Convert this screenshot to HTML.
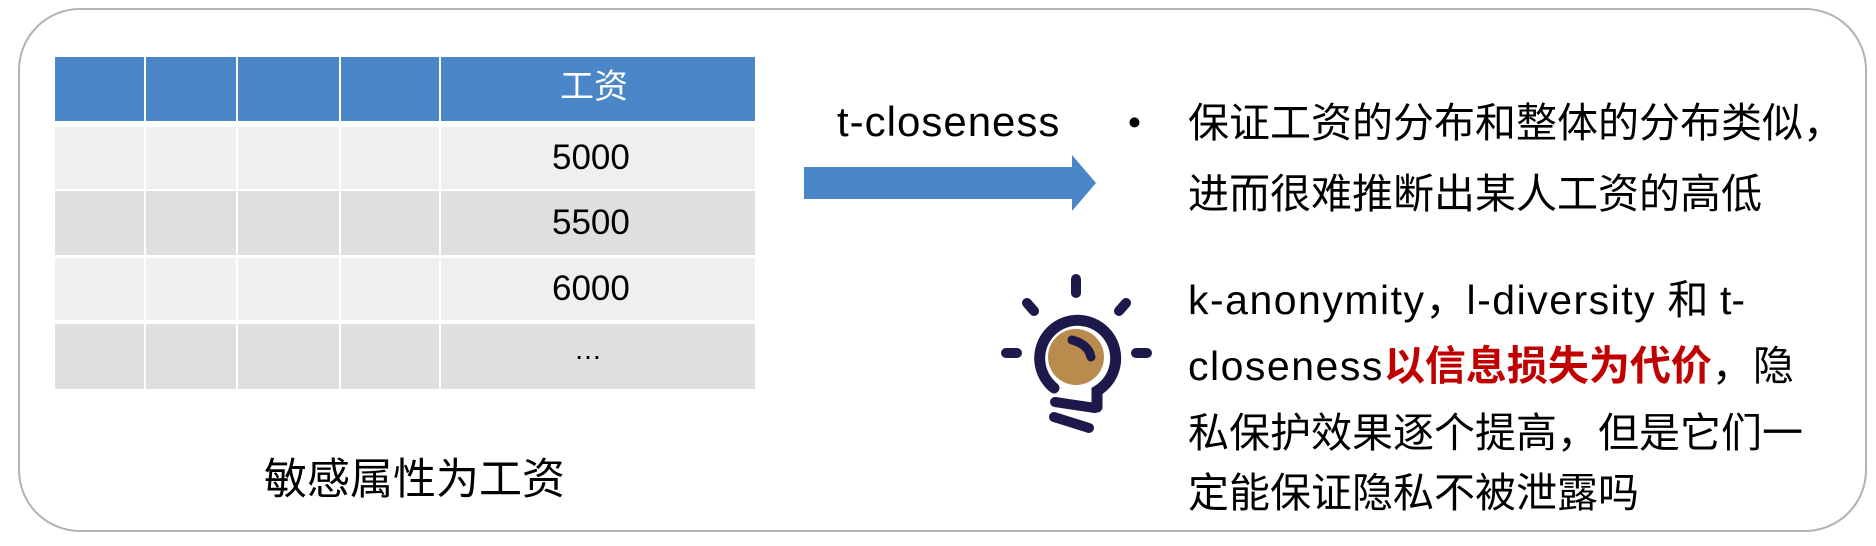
<!DOCTYPE html>
<html><head><meta charset="utf-8"><style>
html,body{margin:0;padding:0;background:#fff;}
body{width:1876px;height:546px;position:relative;overflow:hidden;font-family:"Liberation Sans","Noto Sans CJK SC",sans-serif;color:#000;}
.frame{position:absolute;left:18px;top:8px;width:1849px;height:524px;border:2px solid #b3b3b3;border-radius:62px;box-sizing:border-box;}
.c{position:absolute;box-sizing:border-box;}
.t{position:absolute;white-space:nowrap;}
.l{letter-spacing:1.5px;}
</style></head><body>
<div class="frame"></div>

<div class="c" style="left:55px;top:57px;width:700px;height:64px;background:#4a86c8;"></div>
<div class="c" style="left:55px;top:127px;width:700px;height:62px;background:#efefef;"></div>
<div class="c" style="left:55px;top:191px;width:700px;height:64px;background:#dfdfdf;"></div>
<div class="c" style="left:55px;top:258px;width:700px;height:62px;background:#efefef;"></div>
<div class="c" style="left:55px;top:324px;width:700px;height:65px;background:#dfdfdf;"></div>
<div class="c" style="left:144px;top:57px;width:2px;height:332px;background:#fff;"></div>
<div class="c" style="left:236px;top:57px;width:2px;height:332px;background:#fff;"></div>
<div class="c" style="left:339px;top:57px;width:2px;height:332px;background:#fff;"></div>
<div class="c" style="left:439px;top:57px;width:2px;height:332px;background:#fff;"></div>
<div class="t" style="left:560px;top:67px;font-size:34px;color:#fff;line-height:40px;">工资</div>
<div class="t" style="left:552px;top:138px;font-size:35px;line-height:40px;">5000</div>
<div class="t" style="left:552px;top:203px;font-size:35px;line-height:40px;">5500</div>
<div class="t" style="left:552px;top:269px;font-size:35px;line-height:40px;">6000</div>
<div class="t" style="left:574px;top:330px;font-size:28px;line-height:40px;">…</div>
<div class="t" style="left:264px;top:453px;font-size:43px;line-height:54px;">敏感属性为工资</div>

<div class="t" style="left:837px;top:97px;font-size:42px;line-height:50px;letter-spacing:1px;">t-closeness</div>
<svg class="c" style="left:0;top:0" width="1876" height="546">
<polygon points="804,167 1072,167 1072,155 1096,183 1072,211 1072,199 804,199" fill="#4a86c8"/>
<g stroke="#1b1a4b" stroke-linecap="round" fill="none" stroke-width="10">
<line x1="1076" y1="279" x2="1076" y2="293"/>
<line x1="1027" y1="303" x2="1034" y2="311"/>
<line x1="1126" y1="303" x2="1119" y2="311"/>
<line x1="1006" y1="353" x2="1017" y2="353"/>
<line x1="1136" y1="353" x2="1147" y2="353"/>
<path d="M1054,388 A38,38 0 1 1 1097,391 L1097,407" stroke-width="11"/>
<line x1="1055" y1="402" x2="1095" y2="408"/>
<line x1="1054" y1="417" x2="1089" y2="428"/>
</g>
<circle cx="1076" cy="357" r="28" fill="#b98c4e"/>
<path d="M1072,340 Q1088,344 1091,357" stroke="#1b1a4b" stroke-width="9" stroke-linecap="round" fill="none"/>
</svg>

<div class="t" style="left:1128px;top:99px;font-size:37px;line-height:48px;">•</div>
<div class="t" style="left:1188px;top:96px;font-size:41px;line-height:54px;">保证工资的分布和整体的分布类似，</div>
<div class="t" style="left:1188px;top:167px;font-size:41px;line-height:54px;">进而很难推断出某人工资的高低</div>

<div class="t" style="left:1188px;top:273px;font-size:41px;line-height:54px;"><span class="l">k-anonymity</span>，<span class="l">l-diversity</span> 和 t-</div>
<div class="t" style="left:1188px;top:339px;font-size:41px;line-height:54px;"><span class="l">closeness</span><span style="color:#c00000;font-weight:bold;">以信息损失为代价</span>，隐</div>
<div class="t" style="left:1188px;top:406px;font-size:41px;line-height:54px;">私保护效果逐个提高，但是它们一</div>
<div class="t" style="left:1188px;top:466px;font-size:41px;line-height:54px;">定能保证隐私不被泄露吗</div>
</body></html>
